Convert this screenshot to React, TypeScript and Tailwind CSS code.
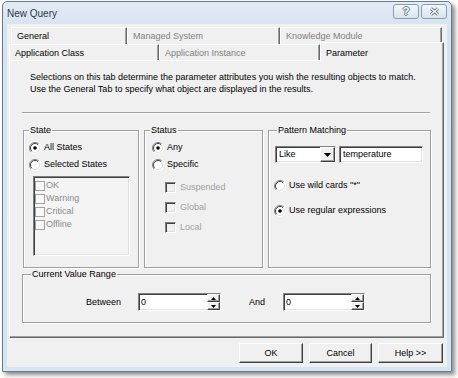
import React from "react";

const sunken =
  "border border-t-[#808080] border-l-[#808080] border-b-white border-r-white shadow-[inset_1px_1px_0_#404040,inset_-1px_-1px_0_#dfdfdf]";
const raised =
  "border border-t-white border-l-white border-b-[#404040] border-r-[#404040] shadow-[inset_-1px_-1px_0_#a0a0a0]";
const etched =
  "border border-[#a0a0a0] shadow-[inset_1px_1px_0_#ffffff,1px_1px_0_#ffffff]";

function Radio({ checked }: { checked?: boolean }) {
  return (
    <svg width="12" height="12" viewBox="0 0 12 12" className="shrink-0">
      <circle cx="6" cy="6" r="5.5" fill="#ffffff" />
      <path d="M9.9 2.1 A5.5 5.5 0 0 0 2.1 9.9" stroke="#808080" fill="none" />
      <path d="M9.2 2.8 A4.5 4.5 0 0 0 2.8 9.2" stroke="#404040" fill="none" />
      <path d="M9.9 2.1 A5.5 5.5 0 0 1 2.1 9.9" stroke="#ffffff" fill="none" />
      <path d="M9.2 2.8 A4.5 4.5 0 0 1 2.8 9.2" stroke="#dfdfdf" fill="none" />
      {checked && <circle cx="6" cy="6" r="1.8" fill="#000000" />}
    </svg>
  );
}

function RadioRow({ label, checked, className = "" }: { label: string; checked?: boolean; className?: string }) {
  return (
    <div className={`flex items-center h-[13px] gap-[3px] ${className}`}>
      <Radio checked={checked} />
      <span>{label}</span>
    </div>
  );
}

function Check3D({ label, className = "" }: { label: string; className?: string }) {
  return (
    <div className={`flex items-center h-[13px] gap-[4px] text-[#a0a0a0] ${className}`}>
      <span className={`w-[11px] h-[11px] bg-[#f0f0f0] ${sunken}`} />
      <span>{label}</span>
    </div>
  );
}

function Spin({ width }: { width: string }) {
  return (
    <div className={`${width} h-[18px] bg-white flex ${sunken}`}>
      <span className="flex-1 pl-[2px] leading-[16px]">0</span>
      <div className="w-[13px] flex flex-col">
        {[0, 1].map((i) => (
          <div key={i} className={`flex-1 bg-[#f0f0f0] flex items-center justify-center ${raised}`}>
            <svg width="5" height="3" viewBox="0 0 5 3">
              <path d={i === 0 ? "M2.5 0 L5 3 L0 3 Z" : "M0 0 L5 0 L2.5 3 Z"} fill="#000" />
            </svg>
          </div>
        ))}
      </div>
    </div>
  );
}

function Tab({
  label,
  width,
  disabled,
  selected,
}: {
  label: string;
  width: string;
  disabled?: boolean;
  selected?: boolean;
}) {
  return (
    <div
      className={`${width} border-t border-l border-white border-r border-r-[#696969] shadow-[inset_-1px_0_0_#a0a0a0] pl-[5px] ${
        selected ? "relative z-10 -mt-[2px] h-[19px] pt-[5px] bg-[#f0f0f0]" : "h-full pt-[3px]"
      } ${disabled ? "text-[#808080]" : "text-black"}`}
    >
      {label}
    </div>
  );
}

export default function App() {
  return (
    <div className="w-[458px] h-[378px] bg-white pt-[1px] pl-[2px] font-['Liberation_Sans',Arial,sans-serif] text-[9px] leading-[11px] text-black overflow-hidden">
      <div className="w-[450px] h-[371px] flex flex-col border border-[#6a7a8e] rounded-t-[5px] bg-[linear-gradient(#e2ebf6,#d6e2f0_30px,#d9e4f1)] shadow-[3px_3px_4px_rgba(0,0,0,0.45)]">
        {/* Title bar */}
        <div className="h-[22px] flex items-start justify-between pl-[4px] pr-[4px]">
          <span className="text-[10px] leading-[12px] text-[#2c3846] mt-[6px]">New Query</span>
          <div className="flex gap-[2px] mt-[2px]">
            <div className="w-[26px] h-[15px] rounded-[3px] border border-[#8a9bb0] bg-[linear-gradient(#f3f7fb,#d9e3ef)] flex items-center justify-center">
              <span className="text-[11px] leading-[11px] font-bold text-white [text-shadow:1px_0_0_#6c7a8c,-1px_0_0_#6c7a8c,0_1px_0_#6c7a8c,0_-1px_0_#6c7a8c]">
                ?
              </span>
            </div>
            <div className="w-[26px] h-[15px] rounded-[3px] border border-[#8a9bb0] bg-[linear-gradient(#f3f7fb,#d9e3ef)] flex items-center justify-center">
              <svg width="11" height="9" viewBox="0 0 11 9">
                <path d="M2 1.5 L9 7.5 M9 1.5 L2 7.5" stroke="#6c7a8c" strokeWidth="3" />
                <path d="M2 1.5 L9 7.5 M9 1.5 L2 7.5" stroke="#ffffff" strokeWidth="1.2" />
              </svg>
            </div>
          </div>
        </div>

        {/* Client */}
        <div className="flex-1 mx-[4px] mb-[4px] bg-[#f0f0f0] pt-[3px] flex flex-col">
          <div className="flex h-[17px] ml-[4px]">
            <Tab label="General" width="w-[116px]" />
            <Tab label="Managed System" width="w-[153px]" disabled />
            <Tab label="Knowledge Module" width="w-[162px]" disabled />
          </div>
          <div className="flex h-[16px] ml-[2px]">
            <Tab label="Application Class" width="w-[150px]" />
            <Tab label="Application Instance" width="w-[161px]" disabled />
            <Tab label="Parameter" width="w-[124px]" selected />
          </div>

          {/* Panel */}
          <div className="ml-[2px] w-[435px] h-[278px] border-l border-t border-white border-r border-r-[#696969] border-b border-b-[#696969] shadow-[inset_-1px_-1px_0_#a0a0a0] pt-[10px]">
            <p className="pl-[20px] leading-[12px]">
              Selections on this tab determine the parameter attributes you wish the resulting objects to match.
              <br />
              Use the General Tab to specify what object are displayed in the results.
            </p>
            <div className="mt-[17px] ml-[12px] w-[408px] h-[2px] border-t border-[#a0a0a0] border-b border-b-white" />

            <div className="flex gap-[5px] mt-[11px] ml-[13px]">
              {/* State */}
              <fieldset className={`w-[116px] h-[143px] px-[5px] ${etched}`}>
                <legend className="px-[1px] bg-[#f0f0f0]">State</legend>
                <RadioRow label="All States" checked className="mt-[5px]" />
                <RadioRow label="Selected States" className="mt-[4px]" />
                <div className={`mt-[5px] ml-[4px] w-[97px] h-[80px] bg-[#f4f4f4] pt-[2px] pl-[1px] text-[#8a8a8a] ${sunken}`}>
                  {["OK", "Warning", "Critical", "Offline"].map((s) => (
                    <div key={s} className="flex items-center h-[13px] gap-[1px]">
                      <span className="w-[10px] h-[10px] border border-[#a0a0a0] bg-[#f8f8f8]" />
                      <span>{s}</span>
                    </div>
                  ))}
                </div>
              </fieldset>

              {/* Status */}
              <fieldset className={`w-[119px] h-[143px] px-[5px] ${etched}`}>
                <legend className="px-[1px] bg-[#f0f0f0]">Status</legend>
                <div className="pl-[2px]">
                  <RadioRow label="Any" checked className="mt-[5px]" />
                  <RadioRow label="Specific" className="mt-[4px]" />
                </div>
                <div className="ml-[15px] mt-[10px] flex flex-col gap-[7px]">
                  <Check3D label="Suspended" />
                  <Check3D label="Global" />
                  <Check3D label="Local" />
                </div>
              </fieldset>

              {/* Pattern Matching */}
              <fieldset className={`w-[163px] h-[143px] px-[5px] ${etched}`}>
                <legend className="ml-[3px] px-[1px] bg-[#f0f0f0]">Pattern Matching</legend>
                <div className="flex gap-[3px] mt-[10px] ml-[1px]">
                  <div className={`w-[61px] h-[17px] bg-white flex ${sunken}`}>
                    <span className="flex-1 pl-[3px] leading-[15px]">Like</span>
                    <div className={`w-[15px] bg-[#f0f0f0] flex items-center justify-center ${raised}`}>
                      <svg width="7" height="4" viewBox="0 0 7 4">
                        <path d="M0 0 L7 0 L3.5 4 Z" fill="#000" />
                      </svg>
                    </div>
                  </div>
                  <div className={`w-[84px] h-[17px] bg-white pl-[3px] leading-[15px] ${sunken}`}>temperature</div>
                </div>
                <RadioRow label={'Use wild cards "*"'} className="mt-[16px]" />
                <RadioRow label="Use regular expressions" checked className="mt-[12px]" />
              </fieldset>
            </div>

            {/* Current Value Range */}
            <fieldset className={`mt-[1px] ml-[12px] w-[409px] h-[54px] px-[5px] ${etched}`}>
              <legend className="ml-[3px] px-[1px] bg-[#f0f0f0]">Current Value Range</legend>
              <div className="flex items-center mt-[13px]">
                <span className="ml-[58px]">Between</span>
                <div className="ml-[17px]">
                  <Spin width="w-[83px]" />
                </div>
                <span className="ml-[28px]">And</span>
                <div className="ml-[18px]">
                  <Spin width="w-[82px]" />
                </div>
              </div>
            </fieldset>
          </div>

          {/* Buttons */}
          <div className="flex justify-end gap-[6px] mt-[5px] mr-[4px]">
            {[
              ["OK", "w-[64px]"],
              ["Cancel", "w-[63px]"],
              ["Help >>", "w-[65px]"],
            ].map(([label, w]) => (
              <button key={label} className={`${w} h-[20px] bg-[#f0f0f0] text-[9px] ${raised}`}>
                {label}
              </button>
            ))}
          </div>
        </div>
      </div>
    </div>
  );
}
